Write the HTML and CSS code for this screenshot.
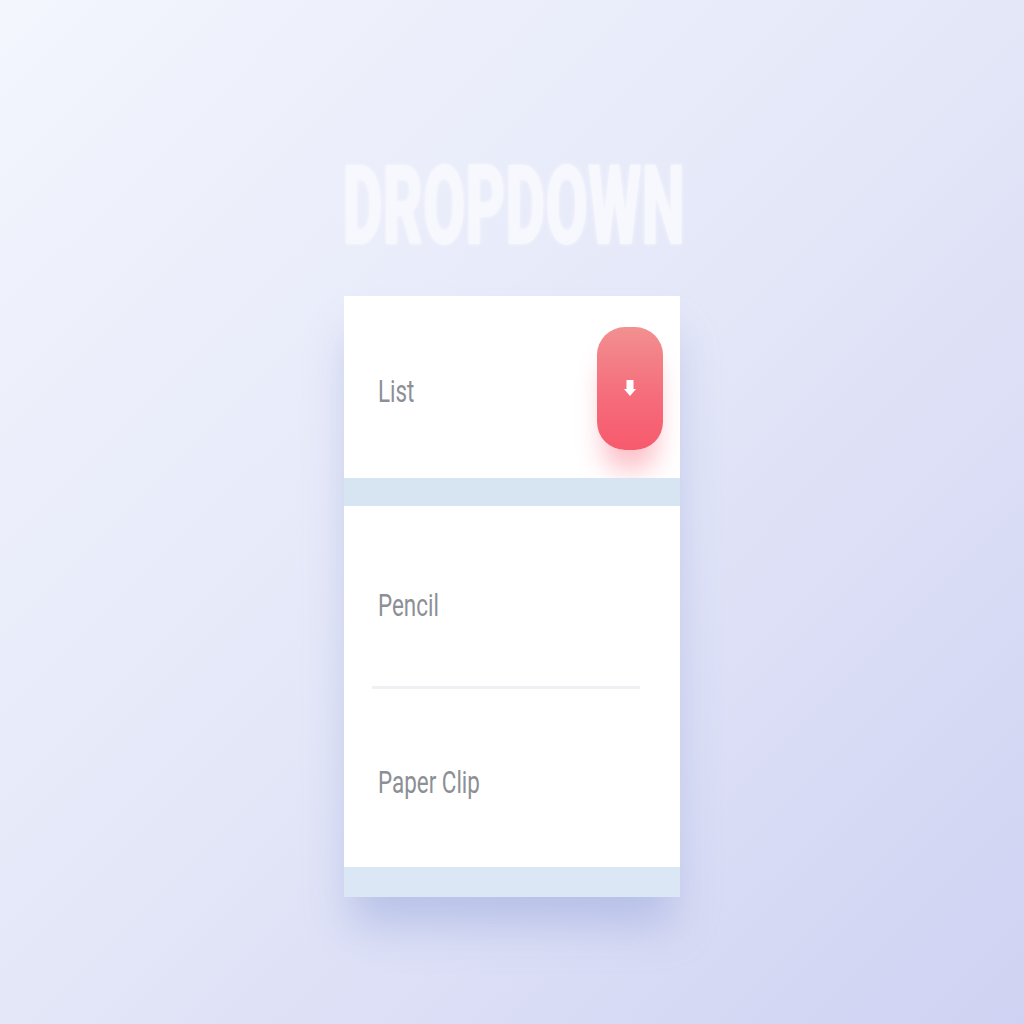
FILE: index.html
```html
<!DOCTYPE html>
<html>
<head>
<meta charset="utf-8">
<link rel="stylesheet" href="styles.css">
</head>
<body>
  <main class="page">
    <h1 class="title"><span class="title-text">DROPDOWN</span></h1>
    <section class="dropdown">
      <div class="card head">
        <span class="label">List</span>
        <button class="toggle" aria-label="Open">
          <svg width="12" height="18" viewBox="0 0 12 18"><path d="M2.5 1h7v9h2.5l-6 7-6-7h2.5z" fill="#fff"/></svg>
        </button>
      </div>
      <div class="strip"></div>
      <div class="card menu">
        <div class="row"><span class="label">Pencil</span></div>
        <div class="divider"></div>
        <div class="row"><span class="label">Paper Clip</span></div>
      </div>
      <div class="strip bottom"></div>
    </section>
  </main>
</body>
</html>
```

FILE: styles.css
```css
html, body {
  margin: 0;
  padding: 0;
}
body {
  width: 1024px;
  height: 1024px;
  overflow: hidden;
  background: linear-gradient(135deg, #f3f6fd 0%, #e4e7f8 50%, #cfd2f2 100%);
  font-family: Roboto, "Liberation Sans", sans-serif;
}
.page {
  display: flex;
  flex-direction: column;
  align-items: center;
  padding-top: 150px;
}
.title {
  margin: 0;
  height: 112px;
  width: 340px;
  display: flex;
  justify-content: center;
  margin-left: 4px;
}
.title-text {
  display: inline-block;
  font-size: 112px;
  line-height: 112px;
  font-weight: 900;
  color: #f6f8fe;
  transform: scaleX(0.55);
  transform-origin: center;
  white-space: nowrap;
  text-shadow: 0 0 6px rgba(255,255,255,0.7);
}
.dropdown {
  margin-top: 34px;
  width: 336px;
  display: flex;
  flex-direction: column;
  box-shadow: 0 34px 40px -6px rgba(140, 158, 215, 0.45);
}
.card {
  background: #ffffff;
}
.head {
  height: 182px;
  display: flex;
  align-items: center;
  justify-content: space-between;
  padding: 0 17px 0 34px;
  box-sizing: border-box;
}
.label {
  display: inline-block;
  font-size: 32px;
  color: #8c8f96;
  transform: scaleX(0.7);
  transform-origin: left center;
  white-space: nowrap;
  margin-top: 8px;
}
.toggle {
  width: 66px;
  height: 123px;
  border: none;
  border-radius: 28px;
  background: linear-gradient(180deg, #f29090 0%, #f56d7c 55%, #f75a6c 100%);
  box-shadow: 0 26px 26px -6px rgba(246, 90, 110, 0.38);
  display: flex;
  align-items: center;
  justify-content: center;
  padding: 0;
  margin-top: 2px;
}
.strip {
  height: 28px;
  background: #d7e4f2;
}
.strip.bottom {
  height: 30px;
  background: #dce7f5;
}
.menu {
  display: flex;
  flex-direction: column;
  padding-top: 2px;
}
.row {
  height: 178px;
  display: flex;
  align-items: center;
  padding-left: 34px;
}
.row:first-child .label {
  margin-top: 16px;
}
.divider {
  height: 3px;
  background: #eef0f4;
  margin: 0 40px 0 28px;
}
```
